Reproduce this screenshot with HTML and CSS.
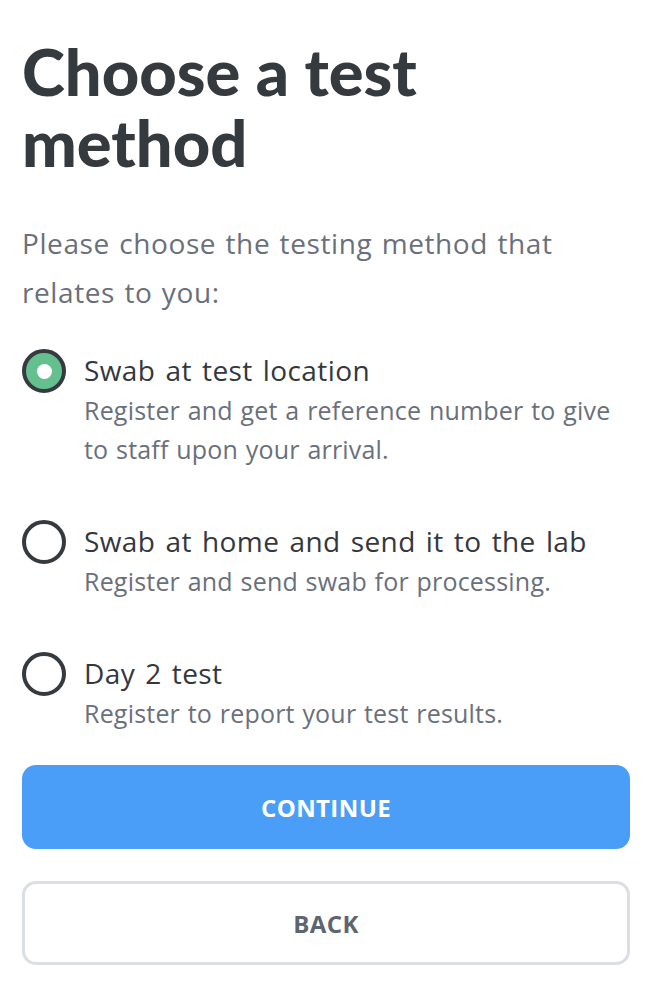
FILE: index.html
```html
<!DOCTYPE html>
<html lang="en">
<head>
<meta charset="utf-8">
<title>Choose a test method</title>
<link rel="stylesheet" href="styles.css">
</head>
<body>
<main class="page">
  <h1 class="title">Choose a test method</h1>
  <p class="intro">Please choose the testing method that relates to you:</p>
  <div class="options">
    <label class="option">
      <span class="radio radio--checked"><span class="radio-dot"></span></span>
      <span class="option-body">
        <span class="option-title">Swab at test location</span>
        <span class="option-desc">Register and get a reference number to give to staff upon your arrival.</span>
      </span>
    </label>
    <label class="option">
      <span class="radio"></span>
      <span class="option-body">
        <span class="option-title">Swab at home and send it to the lab</span>
        <span class="option-desc">Register and send swab for processing.</span>
      </span>
    </label>
    <label class="option">
      <span class="radio"></span>
      <span class="option-body">
        <span class="option-title">Day 2 test</span>
        <span class="option-desc">Register to report your test results.</span>
      </span>
    </label>
  </div>
  <div class="actions">
    <button class="btn btn--primary" type="button">CONTINUE</button>
    <button class="btn btn--secondary" type="button">BACK</button>
  </div>
</main>
</body>
</html>
```
FILE: styles.css
```css
html, body {
  margin: 0;
  padding: 0;
  background: #ffffff;
}
body {
  font-family: "Open Sans", "Noto Sans", "Liberation Sans", sans-serif;
  color: #33383d;
}
.page {
  padding: 36px 38px 0 22px;
}
.title {
  margin: 0;
  font-family: Lato, "Open Sans", sans-serif;
  font-size: 65px;
  line-height: 71px;
  font-weight: 900;
  color: #353a3f;
  width: 420px;
}
.intro {
  margin: 41px 0 0;
  font-size: 28px;
  line-height: 49px;
  letter-spacing: 0.6px;
  word-spacing: 1.5px;
  color: #6a707b;
}
.options {
  margin-top: 32px;
  display: flex;
  flex-direction: column;
  gap: 51px;
}
.option {
  display: flex;
  gap: 18px;
  align-items: flex-start;
}
.radio {
  flex: none;
  box-sizing: border-box;
  width: 44px;
  height: 44px;
  border: 4px solid #353a3f;
  border-radius: 50%;
  display: flex;
  align-items: center;
  justify-content: center;
  background: #fff;
}
.radio--checked {
  background: #64c08e;
}
.radio-dot {
  width: 15px;
  height: 15px;
  border-radius: 50%;
  background: #fff;
}
.option-body {
  display: flex;
  flex-direction: column;
}
.option-title {
  font-size: 28px;
  line-height: 42px;
  letter-spacing: 0.4px;
  word-spacing: 2.5px;
  color: #33383d;
}
.option-desc {
  font-size: 25px;
  line-height: 39px;
  letter-spacing: 0.2px;
  word-spacing: 1px;
  color: #6a707b;
}
.actions {
  margin-top: 32px;
  display: flex;
  flex-direction: column;
  gap: 32px;
}
.btn {
  box-sizing: border-box;
  width: 100%;
  height: 84px;
  border-radius: 14px;
  font-family: "Open Sans", "Liberation Sans", sans-serif;
  font-weight: 700;
  font-size: 24px;
  letter-spacing: 0.4px;
  cursor: pointer;
}
.btn--primary {
  background: #4a9ef8;
  color: #ffffff;
  border: none;
}
.btn--secondary {
  background: #ffffff;
  color: #5e6571;
  border: 3px solid #dbdee4;
}
```
